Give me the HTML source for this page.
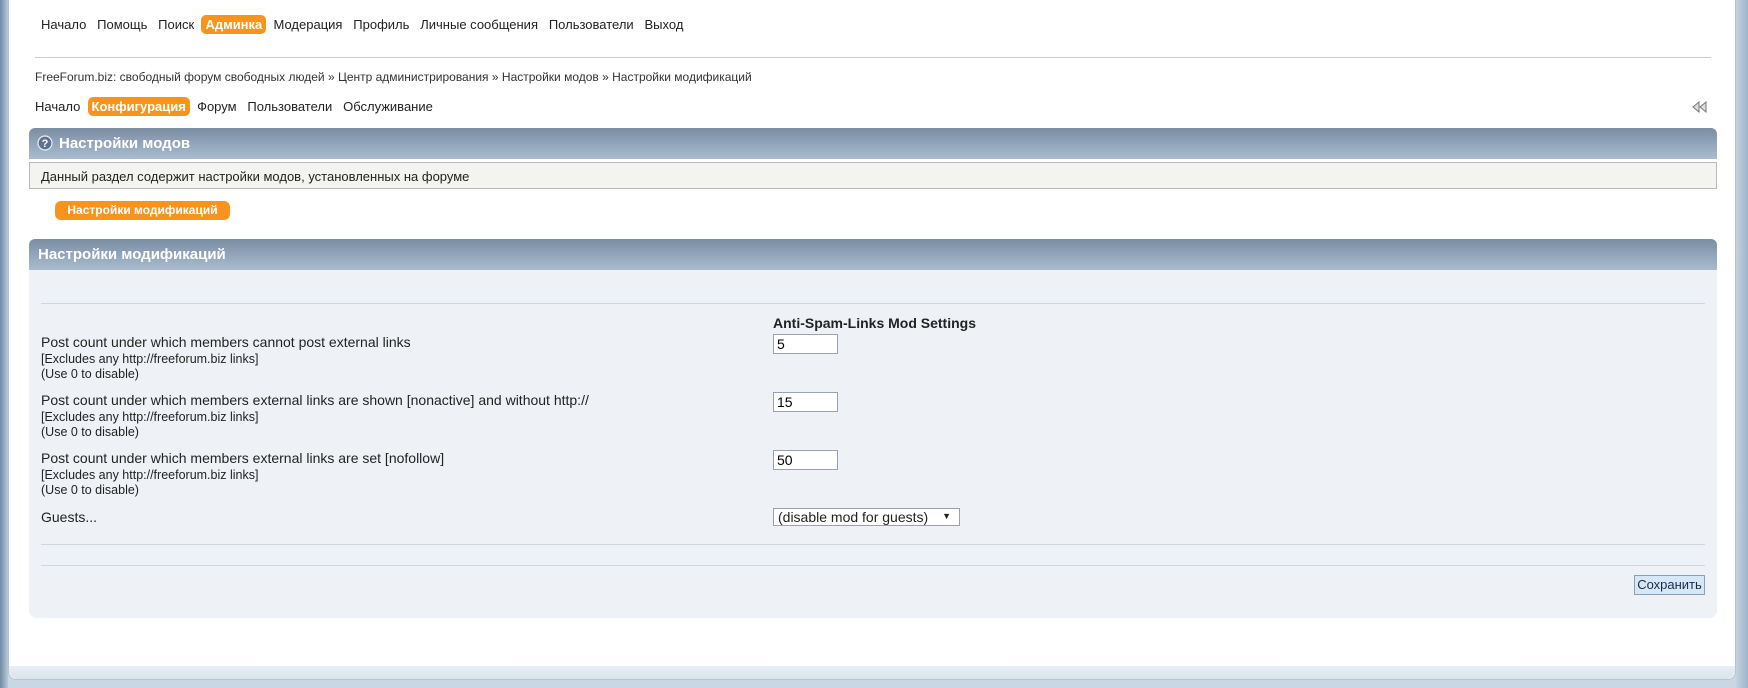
<!DOCTYPE html>
<html><head><meta charset="utf-8"><style>
*{margin:0;padding:0;box-sizing:border-box}
body{width:1748px;height:688px;background:linear-gradient(#dfe7ef,#c9d6e3);font-family:"Liberation Sans","DejaVu Sans",sans-serif;font-size:13px;color:#222;position:relative;overflow:hidden}
.strip{position:absolute;left:0;top:0;width:8px;height:688px;background:linear-gradient(90deg,#6f8aa5,#b9c9d8)}
.rstrip{position:absolute;right:0;top:0;width:12px;height:688px;background:linear-gradient(90deg,#c5d3e0,#9fb4c9)}
.page{position:absolute;left:8px;top:0;width:1728px;height:680px;background:#fff;border:1px solid #b9c3cc;border-top:none;border-radius:0 0 8px 8px}
.pagebot{position:absolute;left:9px;top:666px;width:1726px;height:13px;background:linear-gradient(#e8eef4,#dbe4ec);border-radius:0 0 8px 8px}
.abs{position:absolute;white-space:nowrap}
.pill{background:#f7941d;color:#fff;font-weight:bold;border-radius:5px;padding:2px 4px}
.hdr{position:absolute;left:29px;width:1688px;height:31px;border-radius:6px 6px 0 0;background:linear-gradient(#7b8da3,#a9bccf);color:#fff;font-weight:bold;font-size:15px;line-height:31px;padding-left:9px}
.hr{position:absolute;height:1px;background:#cfd6dd}
input.t{position:absolute;width:65px;height:20px;border:1px solid #9aa3ad;font:14px "Liberation Sans",sans-serif;padding-left:3px;background:#fff}
.lbl{font-size:14px}
.small{font-size:12.5px}
</style></head><body>
<div class="strip"></div><div class="rstrip"></div>
<div class="page"></div><div class="pagebot"></div>

<div class="abs" style="left:41px;top:17px">Начало&nbsp;&nbsp; Помощь&nbsp;&nbsp; Поиск&nbsp;&nbsp;<span class="pill">Админка</span>&nbsp; Модерация&nbsp;&nbsp; Профиль&nbsp;&nbsp; Личные сообщения&nbsp;&nbsp; Пользователи&nbsp;&nbsp; Выход</div>
<div class="hr" style="left:35px;top:57px;width:1676px;background:#c8ced4"></div>
<div class="abs" style="left:35px;top:70px;font-size:12px;color:#333">FreeForum.biz: свободный форум свободных людей » Центр администрирования » Настройки модов » Настройки модификаций</div>
<div class="abs" style="left:35px;top:99px">Начало&nbsp;&nbsp;<span class="pill">Конфигурация</span>&nbsp; Форум&nbsp;&nbsp; Пользователи&nbsp;&nbsp; Обслуживание</div>
<svg class="abs" style="left:1692px;top:101px" width="16" height="12" viewBox="0 0 16 12"><path d="M7 1L1 6l6 5z M14 1L8 6l6 5z" fill="#ddd" stroke="#777" stroke-width="1"/></svg>

<div class="hdr" style="top:128px;padding-left:30px">Настройки модов</div>
<svg class="abs" style="left:37px;top:135px" width="16" height="16" viewBox="0 0 16 16"><circle cx="8" cy="8" r="7" fill="#5d7290" stroke="#e8eef4" stroke-width="1.2"/><text x="8" y="12" font-size="11" font-family="Liberation Sans" fill="#fff" text-anchor="middle" font-weight="bold">?</text></svg>
<div class="abs" style="left:29px;top:162px;width:1688px;height:27px;background:#f3f3ef;border:1px solid #bbb;padding:6px 0 0 11px;font-size:13px">Данный раздел содержит настройки модов, установленных на форуме</div>
<div class="abs pill" style="left:55px;top:201px;height:19px;width:175px;font-size:12px;line-height:15px;text-align:center;border-radius:6px">Настройки модификаций</div>

<div class="hdr" style="top:239px">Настройки модификаций</div>
<div class="abs" style="left:29px;top:270px;width:1688px;height:348px;background:#eef2f6;border-radius:0 0 8px 8px"></div>
<div class="hr" style="left:41px;top:303px;width:1664px"></div>
<div class="abs" style="left:773px;top:315px;font-weight:bold;font-size:14px">Anti-Spam-Links Mod Settings</div>

<div class="abs lbl" style="left:41px;top:334px">Post count under which members cannot post external links</div>
<div class="abs small" style="left:41px;top:352px">[Excludes any http://freeforum.biz links]</div>
<div class="abs small" style="left:41px;top:367px">(Use 0 to disable)</div>
<input class="t" style="left:773px;top:334px" value="5">

<div class="abs lbl" style="left:41px;top:392px">Post count under which members external links are shown [nonactive] and without http://</div>
<div class="abs small" style="left:41px;top:410px">[Excludes any http://freeforum.biz links]</div>
<div class="abs small" style="left:41px;top:425px">(Use 0 to disable)</div>
<input class="t" style="left:773px;top:392px" value="15">

<div class="abs lbl" style="left:41px;top:450px">Post count under which members external links are set [nofollow]</div>
<div class="abs small" style="left:41px;top:468px">[Excludes any http://freeforum.biz links]</div>
<div class="abs small" style="left:41px;top:483px">(Use 0 to disable)</div>
<input class="t" style="left:773px;top:450px" value="50">

<div class="abs lbl" style="left:41px;top:509px">Guests...</div>
<div class="abs" style="left:773px;top:508px;width:187px;height:18px;background:#fff;border:1px solid #9aa3ad;padding:0 0 0 4px;font-size:14px">(disable mod for guests)<span style="position:absolute;right:8px;top:2px;font-size:9px">▼</span></div>

<div class="hr" style="left:41px;top:544px;width:1664px"></div>
<div class="hr" style="left:41px;top:565px;width:1664px"></div>
<div class="abs" style="left:1634px;top:575px;width:71px;height:20px;background:#d6e8f8;border:1px solid #8aa0b6;text-align:center;line-height:18px;color:#1b2a44">Сохранить</div>
</body></html>
